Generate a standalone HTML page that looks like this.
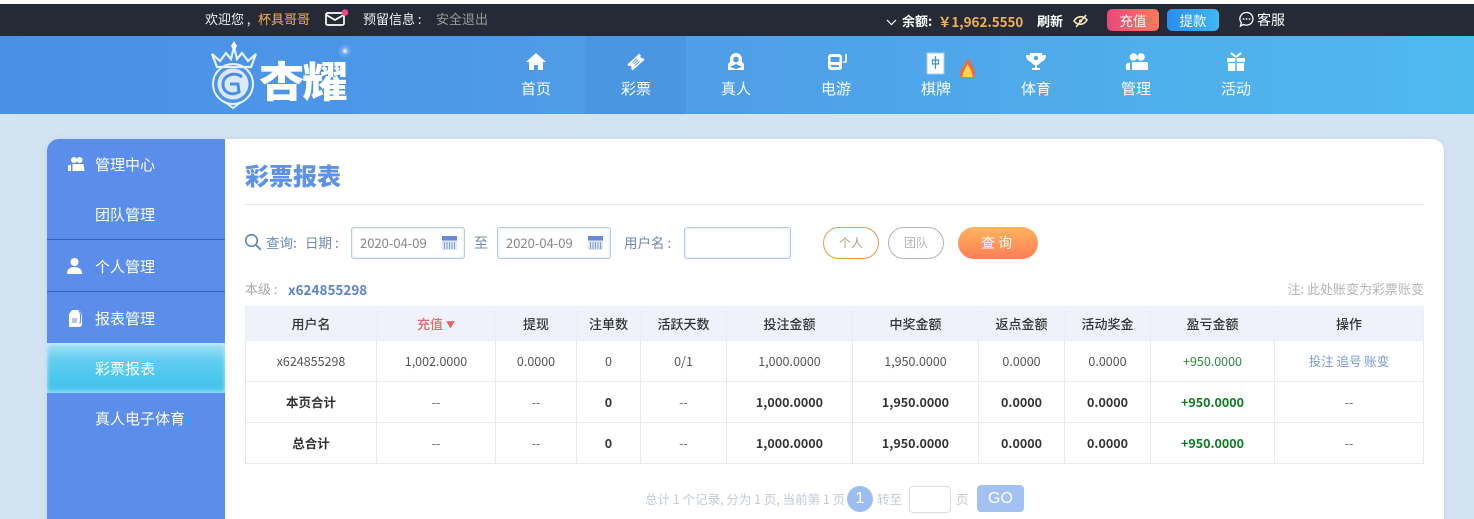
<!DOCTYPE html>
<html><head><meta charset="utf-8"><style>
*{margin:0;padding:0;box-sizing:border-box}
html,body{width:1474px;height:519px;overflow:hidden;background:#d3e3f2;font-family:"Liberation Sans","Noto Sans CJK SC",sans-serif}
body{position:relative}
.a{position:absolute;white-space:nowrap}
.cj{font-family:"Noto Sans CJK SC","Liberation Sans",sans-serif}
.nav{position:absolute;top:36px;width:100px;height:78px;text-align:center;color:#fff;font:15px/20px "Noto Sans CJK SC",sans-serif}
.nav span{position:absolute;left:0;right:0;top:43px}
.nav svg{position:absolute;left:39px;top:15px}
.side{position:absolute;left:95px;color:#fff;font:15px/20px "Noto Sans CJK SC",sans-serif;white-space:nowrap}
table{position:absolute;left:245px;top:306px;width:1179px;border-collapse:collapse;table-layout:fixed;font:12.5px "Noto Sans CJK SC",sans-serif;color:#555;text-align:center}
td,th{border:1px solid #e8e9ee;padding:0}
td{padding-bottom:2px}
th{background:#eff2fb;height:34px;font-weight:500;font-size:13px;color:#333;border-color:#eceef6}
tr.r td{height:41px}
tr.f td{height:41px}
tr.b td{font-weight:700;color:#333}
tr.b td.d{font-weight:400;color:#666}
.in{position:absolute;top:227px;height:32px;border:1px solid #b4c8e2;border-radius:3px;background:#fff;box-shadow:inset 0 0 3px #d8e4f2}
</style></head><body>
<div class="a" style="left:0;top:0;width:1474px;height:4px;background:#fff"></div>
<div class="a" style="left:0;top:4px;width:1474px;height:32px;background:#252a36"></div>
<div class="a cj" style="left:205px;top:10px;font-size:13px;line-height:18px;color:#f2f2f2">欢迎您 ,</div>
<div class="a cj" style="left:258px;top:10px;font-size:13px;line-height:18px;color:#f0b34f">杯具哥哥</div>
<svg class="a" style="left:324px;top:8px" width="26" height="19" viewBox="0 0 26 19"><rect x="2" y="5" width="18" height="12" rx="1.500" fill="none" stroke="#fff" stroke-width="1.700"/><path d="M2.500 7l8.500 5 8.500-5" fill="none" stroke="#fff" stroke-width="1.700"/><circle cx="21" cy="4.500" r="3.300" fill="#f2447f"/></svg>
<div class="a cj" style="left:363px;top:10px;font-size:13px;line-height:18px;color:#f2f2f2">预留信息 :</div>
<div class="a cj" style="left:436px;top:10px;font-size:13px;line-height:18px;color:#999">安全退出</div>
<svg class="a" style="left:886px;top:18px" width="11" height="9" viewBox="0 0 11 9"><path d="M1 2l4.500 4.500L10 2" fill="none" stroke="#fff" stroke-width="1.200"/></svg>
<div class="a cj" style="left:902px;top:12px;font-size:13px;line-height:18px;color:#fff;font-weight:700">余额:</div>
<div class="a cj" style="left:938px;top:12px;font-size:13.400px;line-height:18px;color:#f0b44c;font-weight:700">￥1,962.5550</div>
<div class="a cj" style="left:1037px;top:12px;font-size:13px;line-height:18px;color:#fff;font-weight:700">刷新</div>
<svg class="a" style="left:1072px;top:13px" width="18" height="16" viewBox="0 0 18 16"><path d="M2 8c3-5 9-6 13-1-3 5-9 6-13 1z" fill="none" stroke="#f3e6b8" stroke-width="1.700"/><path d="M14 2L4 14" stroke="#f3e6b8" stroke-width="1.700"/><circle cx="8.500" cy="8" r="1.600" fill="#f3e6b8"/></svg>
<div class="a cj" style="left:1107px;top:9px;width:52px;height:22px;border-radius:5px;background:linear-gradient(90deg,#e8487a,#fb7a5c);color:#fff;font-size:13.500px;line-height:22px;text-align:center">充值</div>
<div class="a cj" style="left:1167px;top:9px;width:52px;height:22px;border-radius:5px;background:linear-gradient(90deg,#2a8cf0,#3fb8f5);color:#fff;font-size:13.500px;line-height:22px;text-align:center">提款</div>
<svg class="a" style="left:1238px;top:11px" width="17" height="17" viewBox="0 0 17 17"><path d="M8.500 1.500a6.500 6.300 0 1 1-3 11.900L2.500 15l.8-3.300A6.500 6.300 0 0 1 8.500 1.500z" fill="none" stroke="#fff" stroke-width="1.300"/><circle cx="5.500" cy="8" r=".9" fill="#fff"/><circle cx="8.500" cy="8" r=".9" fill="#fff"/><circle cx="11.500" cy="8" r=".9" fill="#fff"/></svg>
<div class="a cj" style="left:1257px;top:11px;font-size:14px;line-height:18px;color:#fff">客服</div>

<div class="a" style="left:0;top:36px;width:1474px;height:78px;background:linear-gradient(90deg,#4a8fe6,#4f9fe8 50%,#4fbaee)"></div>
<!-- logo -->
<svg class="a" style="left:205px;top:40px" width="60" height="72" viewBox="0 0 60 72"><path d="M7 14l8 7 6-8 5 6 3-12 3 12 5-6 6 8 8-7-5 13H12z" fill="none" stroke="#e8f0fb" stroke-width="2.200"/><path d="M29 1l3 5-3 5-3-5z" fill="#fff"/><circle cx="28" cy="44" r="20" fill="none" stroke="#eaf2fc" stroke-width="2"/><path d="M20 62l8 6 8-6" fill="none" stroke="#eaf2fc" stroke-width="2"/><circle cx="28" cy="44" r="15.500" fill="#dce9f9"/><path d="M37 37c-7-6-19-2-19 7 0 9 9 12 16 8l-1-8h-8" fill="none" stroke="#4a8fe6" stroke-width="3"/></svg>
<div class="a cj" style="left:259px;top:52px;font-size:42px;line-height:56px;font-weight:900;color:#fff;letter-spacing:-2px;transform:scaleX(1.080);transform-origin:left">杏耀</div>
<div class="a" style="left:337px;top:43px;width:16px;height:16px;background:radial-gradient(circle,#fff,rgba(255,255,255,.2) 28%,transparent 65%)"></div>

<div class="a" style="left:586px;top:36px;width:100px;height:78px;background:#4a96e0"></div>
<div class="nav" style="left:486px"><svg width="22" height="22" viewBox="0 0 22 22"><path d="M11 2L1 11h3v8h5v-5h4v5h5v-8h3z" fill="#fff"/></svg><span>首页</span></div>
<div class="nav" style="left:586px"><svg width="22" height="22" viewBox="0 0 22 22"><g transform="rotate(-42 11 11)"><path d="M3 7h16v2.500a1.500 1.500 0 0 0 0 3V15H3v-2.500a1.500 1.500 0 0 0 0-3z" fill="#fff"/><path d="M8 9h6M8 11h6M8 13h6" stroke="#4a96e0" stroke-width=".9"/></g></svg><span>彩票</span></div>
<div class="nav" style="left:686px"><svg width="22" height="22" viewBox="0 0 22 22"><path d="M11 2a6 6 0 0 1 6 6v3l2 2v6H3v-6l2-2V8a6 6 0 0 1 6-6z" fill="#fff"/><circle cx="11" cy="8.500" r="2.800" fill="#4a9ce6"/><path d="M5 16l6-3 6 3-6 2z" fill="#4a9ce6"/></svg><span>真人</span></div>
<div class="nav" style="left:786px"><svg width="24" height="22" viewBox="0 0 24 22"><rect x="3" y="3" width="14" height="16" rx="3" fill="#fff"/><rect x="5.500" y="6" width="9" height="5" fill="#4a9fe8"/><rect x="6" y="14" width="8" height="2" fill="#4a9fe8"/><path d="M21 3v8h-3" fill="none" stroke="#fff" stroke-width="1.600"/></svg><span>电游</span></div>
<div class="nav" style="left:886px"><svg width="22" height="24" viewBox="0 0 22 24" style="top:16px"><rect x="2" y="1" width="17" height="21" fill="#fff" stroke="#9bd0f2"/><path d="M10.500 4v13M7.500 8h6v4h-6z" fill="none" stroke="#3f8fdc" stroke-width="1.200"/></svg><span>棋牌</span></div>
<svg class="a" style="left:958px;top:56px" width="19" height="22" viewBox="0 0 19 22"><path d="M10 1c1 4 3 6 5 10 2 3 2 7 1 10H3c-2-3-1-7 1-9 2-1 2-4 3-5 1 0 2-3 3-6z" fill="#ee6a40"/><path d="M9.500 8c1 3 5 6 5 13h-10c0-5 3-8 5-13z" fill="#f9d84e"/></svg>
<div class="nav" style="left:986px"><svg width="22" height="22" viewBox="0 0 22 22"><path d="M5 2h12v2h4c0 4-2 6-5 7-1 2-3 3-4 3v3h3v2H7v-2h3v-3c-1 0-3-1-4-3-3-1-5-3-5-7h4z" fill="#fff"/><circle cx="11" cy="7" r="2.200" fill="#4ba8e9"/></svg><span>体育</span></div>
<div class="nav" style="left:1086px"><svg width="24" height="22" viewBox="0 0 24 22"><circle cx="8.500" cy="6" r="3.800" fill="#fff"/><circle cx="16" cy="6" r="3.800" fill="#fff"/><path d="M7 11h14a2 2 0 0 1 2 2v6H7z" fill="#fff"/><path d="M1 19v-5a3 3 0 0 1 4-2v7z" fill="#fff"/></svg><span>管理</span></div>
<div class="nav" style="left:1186px"><svg width="22" height="22" viewBox="0 0 22 22"><path d="M2 7h18v4H2zM3 12h16v8H3z" fill="#fff"/><path d="M11 6V20" stroke="#4db5ec" stroke-width="1.500"/><path d="M11 6L6 2M11 6l5-4" stroke="#fff" stroke-width="2"/></svg><span>活动</span></div>

<!-- panel -->
<div class="a" style="left:47px;top:139px;width:1397px;height:400px;background:#fff;border-radius:12px;box-shadow:0 0 6px rgba(170,190,215,.35)"></div>
<div class="a" style="left:47px;top:139px;width:178px;height:400px;background:#5b8eea;border-radius:12px 0 0 0"></div>
<div class="a" style="left:47px;top:239px;width:178px;height:1px;background:#2f62c4"></div>
<div class="a" style="left:47px;top:291px;width:178px;height:1px;background:#2f62c4"></div>
<div class="a" style="left:47px;top:343px;width:178px;height:50px;background:linear-gradient(180deg,#a8e2f6,#5fcdf0 35%,#45c4ec 85%,#62cdf0);box-shadow:inset 0 0 5px rgba(255,255,255,.6)"></div>
<svg class="a" style="left:67px;top:156px" width="18" height="16" viewBox="0 0 18 16"><circle cx="7" cy="4" r="3" fill="#fff"/><circle cx="12.500" cy="4" r="3" fill="#fff"/><path d="M5.500 8h11l1 7H5.500zM1 15v-4a2 2 0 0 1 3-2v6z" fill="#fff"/></svg>
<svg class="a" style="left:66px;top:257px" width="17" height="18" viewBox="0 0 17 18"><circle cx="8.500" cy="5" r="4" fill="#fff"/><path d="M1 17c0-5 3-7 7.500-7s7.500 2 7.500 7z" fill="#fff"/></svg>
<svg class="a" style="left:67px;top:309px" width="16" height="18" viewBox="0 0 16 18"><path d="M5 1h6c3 1 4 4 4 8v6a3 3 0 0 1-3 3H2V5z" fill="#fff"/><path d="M12 2c2 2 2 6 1 13" fill="none" stroke="#5b8eea"/><rect x="5" y="9" width="5" height="5" fill="#b5c5ee"/></svg>
<div class="side" style="top:155px">管理中心</div>
<div class="side" style="top:205px">团队管理</div>
<div class="side" style="top:257px">个人管理</div>
<div class="side" style="top:309px">报表管理</div>
<div class="side" style="top:359px">彩票报表</div>
<div class="side" style="top:409px">真人电子体育</div>

<div class="a cj" style="left:245px;top:157px;font-size:24px;line-height:35px;font-weight:900;color:#5f92e4">彩票报表</div>
<div class="a" style="left:245px;top:204px;width:1179px;height:1px;background:#e6e9f0"></div>

<svg class="a" style="left:244px;top:233px" width="18" height="18" viewBox="0 0 18 18"><circle cx="7.500" cy="7.500" r="5.800" fill="none" stroke="#5b86c8" stroke-width="1.600"/><path d="M11.800 11.800l5 5" stroke="#5b86c8" stroke-width="1.800"/></svg>
<div class="a cj" style="left:266px;top:232px;font-size:13.500px;line-height:20px;color:#6a8fc8">查询:</div>
<div class="a cj" style="left:305px;top:232px;font-size:13.500px;line-height:20px;color:#7488b0">日期 :</div>
<div class="in" style="left:351px;width:114px"></div>
<div class="a cj" style="left:360px;top:234px;font-size:13px;line-height:18px;color:#888">2020-04-09</div>
<svg class="a" style="left:441px;top:234px" width="17" height="17" viewBox="0 0 17 17"><rect x="1" y="2" width="15" height="14" fill="#dfe7f5"/><rect x="1" y="2" width="15" height="4.500" fill="#6489d8"/><path d="M3.500 8v7M6 8v7M8.500 8v7M11 8v7M13.500 8v7" stroke="#7f9cd8"/></svg>
<div class="a cj" style="left:474px;top:233px;font-size:14px;line-height:20px;color:#6f8ab5">至</div>
<div class="in" style="left:497px;width:114px"></div>
<div class="a cj" style="left:506px;top:234px;font-size:13px;line-height:18px;color:#888">2020-04-09</div>
<svg class="a" style="left:587px;top:234px" width="17" height="17" viewBox="0 0 17 17"><rect x="1" y="2" width="15" height="14" fill="#dfe7f5"/><rect x="1" y="2" width="15" height="4.500" fill="#6489d8"/><path d="M3.500 8v7M6 8v7M8.500 8v7M11 8v7M13.500 8v7" stroke="#7f9cd8"/></svg>
<div class="a cj" style="left:624px;top:232px;font-size:13.500px;line-height:20px;color:#7488b0">用户名 :</div>
<div class="in" style="left:684px;width:107px"></div>
<div class="a cj" style="left:823px;top:227px;width:56px;height:32px;border:1px solid #e79a4e;border-radius:16px;text-align:center;font-size:12px;line-height:30px;color:#b99a80">个人</div>
<div class="a cj" style="left:888px;top:227px;width:56px;height:32px;border:1px solid #b5b5b5;border-radius:16px;text-align:center;font-size:12px;line-height:30px;color:#b5b5b5">团队</div>
<div class="a cj" style="left:958px;top:227px;width:80px;height:32px;border-radius:16px;background:linear-gradient(180deg,#ffb45e,#ff7d56);text-align:center;font-size:14px;line-height:33px;color:#fff;letter-spacing:3px">查询</div>

<div class="a cj" style="left:245px;top:280px;font-size:13px;line-height:18px;color:#aaa">本级 :</div>
<div class="a cj" style="left:288px;top:280px;font-size:13.500px;line-height:18px;font-weight:700;color:#5d85cc">x624855298</div>
<div class="a cj" style="right:50px;top:280px;font-size:13px;line-height:18px;color:#b5b5b5">注: 此处账变为彩票账变</div>

<table><colgroup><col style="width:131px"><col style="width:119px"><col style="width:81px"><col style="width:64px"><col style="width:86px"><col style="width:126px"><col style="width:126px"><col style="width:86px"><col style="width:86px"><col style="width:124px"><col style="width:149px"></colgroup>
<tr><th>用户名</th><th style="color:#e8686e">充值 <span style="font-size:9px;vertical-align:1px">▼</span></th><th>提现</th><th>注单数</th><th>活跃天数</th><th>投注金额</th><th>中奖金额</th><th>返点金额</th><th>活动奖金</th><th>盈亏金额</th><th>操作</th></tr>
<tr class="f"><td>x624855298</td><td>1,002.0000</td><td>0.0000</td><td>0</td><td>0/1</td><td>1,000.0000</td><td>1,950.0000</td><td>0.0000</td><td>0.0000</td><td style="color:#2d8a3e">+950.0000</td><td style="color:#7a9bd6">投注 追号 账变</td></tr>
<tr class="r b"><td>本页合计</td><td class="d">--</td><td class="d">--</td><td>0</td><td class="d">--</td><td>1,000.0000</td><td>1,950.0000</td><td>0.0000</td><td>0.0000</td><td style="color:#0a7a1e">+950.0000</td><td class="d">--</td></tr>
<tr class="r b"><td>总合计</td><td class="d">--</td><td class="d">--</td><td>0</td><td class="d">--</td><td>1,000.0000</td><td>1,950.0000</td><td>0.0000</td><td>0.0000</td><td style="color:#0a7a1e">+950.0000</td><td class="d">--</td></tr>
</table>

<div class="a cj" style="left:645px;top:490px;font-size:12.500px;line-height:18px;color:#c3c9d6">总计 1 个记录, 分为 1 页, 当前第 1 页</div>
<div class="a" style="left:847px;top:486px;width:26px;height:26px;border-radius:50%;background:#9dbdf0;color:#fff;font-size:16px;line-height:26px;text-align:center">1</div>
<div class="a cj" style="left:877px;top:490px;font-size:12.500px;line-height:18px;color:#c3c9d6">转至</div>
<div class="a" style="left:909px;top:486px;width:42px;height:27px;border:1px solid #ddd;border-radius:4px;background:#fff"></div>
<div class="a cj" style="left:956px;top:490px;font-size:12.500px;line-height:18px;color:#c3c9d6">页</div>
<div class="a" style="left:977px;top:485px;width:47px;height:27px;border-radius:4px;background:#a3c1f3;color:#fff;font-size:16px;line-height:28px;text-align:center">GO</div>
</body></html>
